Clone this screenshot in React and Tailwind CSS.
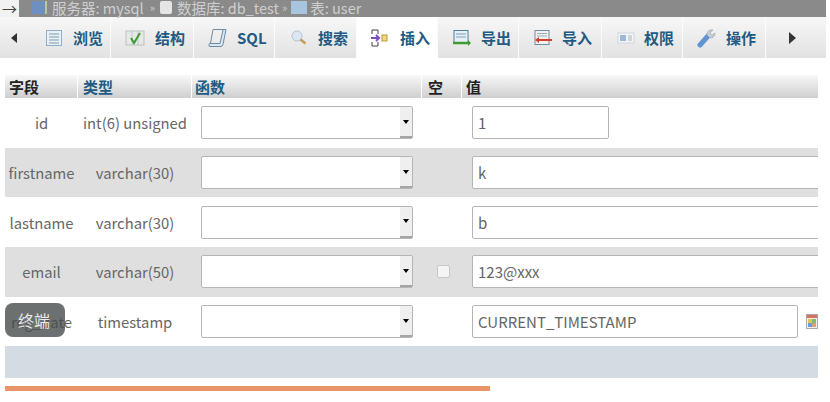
const font = { fontFamily: '"Noto Sans CJK SC", "Noto Sans", sans-serif' };

const BrowseIcon = () => (
  <svg width="18" height="18" viewBox="0 0 18 18" className="shrink-0">
    <rect x="1.5" y="1.5" width="15" height="15" fill="#e8f0f6" stroke="#8fb0c8" />
    <path d="M4 5h10M4 8h10M4 11h10M4 14h10" stroke="#7f9db3" />
  </svg>
);
const StructureIcon = () => (
  <svg width="20" height="18" viewBox="0 0 20 18" className="shrink-0">
    <rect x="1" y="2" width="18" height="14" fill="#e6e9e4" stroke="#b9c4bb" />
    <path d="M7 2v14M13 2v14" stroke="#b8c7d2" />
    <path d="M6 9l3 5 6-10" fill="none" stroke="#3f9a35" strokeWidth="2" />
  </svg>
);
const SqlIcon = () => (
  <svg width="19" height="20" viewBox="0 0 19 20" className="shrink-0">
    <path d="M5 1.5h13l-3 15q-.5 2-2 2H2q-1.5 0-1-2l.5-1H12L15 2" fill="#d9e7f2" stroke="#6d8ba3" />
    <path d="M5 1.5L2.5 15" stroke="#6d8ba3" fill="none" />
  </svg>
);
const SearchIcon = () => (
  <svg width="18" height="18" viewBox="0 0 18 18" className="shrink-0">
    <circle cx="7" cy="7" r="5" fill="#dbe8f2" stroke="#b4c4d0" />
    <path d="M10.5 10.5l5 4" stroke="#c99a56" strokeWidth="2.5" />
  </svg>
);
const InsertIcon = () => (
  <svg width="18" height="20" viewBox="0 0 18 20" className="shrink-0">
    <path d="M1 2h6M1 18h6M1 2v4M1 14v4M7 2v4M7 14v4" stroke="#444" fill="none" />
    <path d="M0 10h8M5 7l3 3-3 3" stroke="#7a4fc0" strokeWidth="2" fill="none" />
    <rect x="11" y="7" width="5" height="6" fill="#f3d77a" stroke="#b59a3a" />
  </svg>
);
const ExportIcon = () => (
  <svg width="20" height="18" viewBox="0 0 20 18" className="shrink-0">
    <rect x="2" y="1.5" width="14" height="12" fill="#e8f0f6" stroke="#4f7fa5" />
    <path d="M4 5h10M4 8h10" stroke="#7f9db3" />
    <path d="M1 14h16" stroke="#3f9a35" strokeWidth="2.5" />
    <path d="M16 11l3 3-3 3z" fill="#3f9a35" />
  </svg>
);
const ImportIcon = () => (
  <svg width="20" height="18" viewBox="0 0 20 18" className="shrink-0">
    <rect x="2" y="1.5" width="14" height="14" fill="#f1f1ee" stroke="#6f8fa8" />
    <path d="M4 4.5h10M4 7h10" stroke="#9bb0bf" />
    <path d="M5 11h14" stroke="#d63c32" strokeWidth="2" />
    <path d="M6 8l-4 3 4 3z" fill="#d63c32" />
  </svg>
);
const PrivIcon = () => (
  <svg width="18" height="14" viewBox="0 0 18 14" className="shrink-0">
    <rect x="1" y="2" width="16" height="10" fill="#f4f5f6" stroke="#cfd6dc" />
    <rect x="3" y="4" width="6" height="6" fill="#9fb7d6" />
    <path d="M11 5h4M11 7h4M11 9h4" stroke="#a9b3bb" />
  </svg>
);
const WrenchIcon = () => (
  <svg width="20" height="20" viewBox="0 0 20 20" className="shrink-0">
    <path d="M3 17L11 8" stroke="#5f95d0" strokeWidth="5" strokeLinecap="round" />
    <path d="M10 7a4.5 4.5 0 0 1 6-5l-3 3 2 2 3-2a4.5 4.5 0 0 1-5 5z" fill="#c7ccd0" stroke="#9aa3aa" strokeWidth=".6" />
  </svg>
);
const CalendarIcon = () => (
  <svg width="12" height="15" viewBox="0 0 12 15" className="shrink-0">
    <rect x=".5" y=".5" width="11" height="14" fill="#f2f2ee" stroke="#a7a9ad" />
    <rect x="1" y="1" width="10" height="3" fill="#d9705f" />
    <rect x="2" y="5" width="4" height="4" fill="#e8c25c" />
    <rect x="6" y="5" width="4" height="4" fill="#7fb87a" />
    <rect x="2" y="9" width="4" height="4" fill="#6e9bd6" />
    <rect x="6" y="9" width="4" height="4" fill="#dba36b" />
  </svg>
);

const tabs = [
  { label: "浏览", Icon: BrowseIcon, box: "w-[83px] pl-[17px] gap-[10px]" },
  { label: "结构", Icon: StructureIcon, box: "w-[83px] pl-[14px] gap-[10px]" },
  { label: "SQL", Icon: SqlIcon, box: "w-[81px] pl-[14px] gap-[10px]" },
  { label: "搜索", Icon: SearchIcon, box: "w-[82px] pl-[15px] gap-[10px]" },
  { label: "插入", Icon: InsertIcon, box: "w-[81px] pl-[14px] gap-[11px]", active: true },
  { label: "导出", Icon: ExportIcon, box: "w-[81px] pl-[14px] gap-[9px]" },
  { label: "导入", Icon: ImportIcon, box: "w-[83px] pl-[14px] gap-[9px]" },
  { label: "权限", Icon: PrivIcon, box: "w-[81px] pl-[15px] gap-[9px]" },
  { label: "操作", Icon: WrenchIcon, box: "w-[83px] pl-[14px] gap-[9px]" },
];

const rows = [
  { name: "id", type: "int(6) unsigned", value: "1", short: true },
  { name: "firstname", type: "varchar(30)", value: "k", alt: true },
  { name: "lastname", type: "varchar(30)", value: "b" },
  { name: "email", type: "varchar(50)", value: "123@xxx", alt: true, nullable: true },
  { name: "reg_date", type: "timestamp", value: "CURRENT_TIMESTAMP", calendar: true },
];

const FakeSelect = () => (
  <div className="w-[212px] h-[33px] bg-white border border-[#b5b5b5] rounded-[2px] flex justify-end">
    <div className="w-[12px] h-full bg-[#efefef] border-b-2 border-[#a5a5a5] flex items-center justify-center">
      <div className="w-0 h-0 border-x-[3px] border-x-transparent border-t-[4px] border-t-black" />
    </div>
  </div>
);

const ValueInput = ({ row }) => {
  const width = row.short ? "w-[137px]" : row.calendar ? "w-[326px]" : "w-[350px]";
  return (
    <input
      readOnly
      value={row.value}
      className={`${width} h-[33px] shrink-0 bg-white border border-[#b5b5b5] rounded-[2px] px-[5px] text-[15px] text-[#666] outline-none`}
      style={font}
    />
  );
};

export default function App() {
  return (
    <div className="w-[830px] h-[402px] relative overflow-hidden bg-white" style={font}>
      {/* path bar */}
      <div className="w-[826px] h-[17px] bg-[#8a8a8a] flex items-center text-[14.5px] text-[#cfcfcf]">
        <div className="w-[19px] h-[17px] bg-[#f2f2f2] flex items-center justify-center text-[#444] text-[15px] leading-none">→</div>
        <div className="flex items-center ml-[13px] pb-[2px] leading-[15px] whitespace-nowrap">
          <div className="w-[15px] h-[13px] bg-[#6f8fc0] border-r-2 border-[#b7c7a0] mr-[5px]" />
          <span>服务器: mysql</span>
          <span className="ml-[6px] mr-[5px] text-[11px]">»</span>
          <div className="w-[12px] h-[13px] bg-[#e5e5e5] rounded-[2px] mr-[5px]" />
          <span>数据库: db_test</span>
          <span className="ml-[3px] mr-[4px] text-[11px]">»</span>
          <div className="w-[16px] h-[13px] bg-[#a9c4de] mr-[3px]" />
          <span>表: user</span>
        </div>
      </div>

      {/* tabs */}
      <div className="w-[826px] h-[41px] flex items-stretch bg-gradient-to-b from-[#f7f7f7] to-[#e2e2e2]">
        <div className="w-[28px] flex items-center justify-center">
          <div className="w-0 h-0 border-y-[5px] border-y-transparent border-r-[6px] border-r-[#333]" />
        </div>
        {tabs.map(({ label, Icon, box, active }) => (
          <div
            key={label}
            className={`${box} shrink-0 flex items-center border-r border-r-[#fbfbfb] text-[15px] font-bold leading-none text-[#235a81] ${active ? "bg-white" : ""}`}
          >
            <Icon />
            <span>{label}</span>
          </div>
        ))}
        <div className="flex-1 flex items-center justify-center pr-[8px]">
          <div className="w-0 h-0 border-y-[6px] border-y-transparent border-l-[7px] border-l-[#333]" />
        </div>
      </div>

      {/* form table */}
      <div className="w-[813px] ml-[5px] mt-[17px]">
        <div className="h-[23px] flex items-center text-[15px] font-bold leading-none bg-gradient-to-b from-[#f8f8f8] to-[#cfcfcf]">
          <div className="w-[73px] pl-[4px] h-full flex items-center border-r border-white text-[#222]">字段</div>
          <div className="w-[114px] pl-[5px] h-full flex items-center border-r border-white text-[#235a81]">类型</div>
          <div className="w-[230px] pl-[3px] h-full flex items-center border-r border-white text-[#235a81]">函数</div>
          <div className="w-[40px] pl-[6px] h-full flex items-center border-r border-white text-[#222]">空</div>
          <div className="flex-1 pl-[4px] h-full flex items-center text-[#222]">值</div>
        </div>

        {rows.map((row) => (
          <div
            key={row.name}
            className={`h-[49.7px] flex items-center text-[14.8px] text-[#666] overflow-hidden ${row.alt ? "bg-[#dfdfdf]" : "bg-white"}`}
          >
            <div className="w-[73px] shrink-0 pt-[1px] text-center whitespace-nowrap">{row.name}</div>
            <div className="w-[114px] shrink-0 pt-[1px] text-center whitespace-nowrap">{row.type}</div>
            <div className="w-[230px] shrink-0 pl-[9px]">
              <FakeSelect />
            </div>
            <div className="w-[50px] shrink-0 pl-[15px]">
              {row.nullable && <div className="w-[13px] h-[13px] bg-[#f4f4f4] border border-[#c8c8c8] rounded-[2px]" />}
            </div>
            <ValueInput row={row} />
            {row.calendar && (
              <div className="ml-[8px]">
                <CalendarIcon />
              </div>
            )}
          </div>
        ))}

        <div className="h-[32px] bg-[#d3dce3]" />
      </div>

      {/* progress bar */}
      <div className="w-[485px] h-[5px] ml-[5px] mt-[8px] bg-[#e8956a]" />

      {/* terminal toast */}
      <div className="absolute left-[5px] top-[303px] w-[60px] h-[34px] rounded-[8px] bg-[#474c4c]/80 text-[#e8e8e8] text-[16px] flex items-center justify-center pr-[2px]">
        终端
      </div>
    </div>
  );
}
